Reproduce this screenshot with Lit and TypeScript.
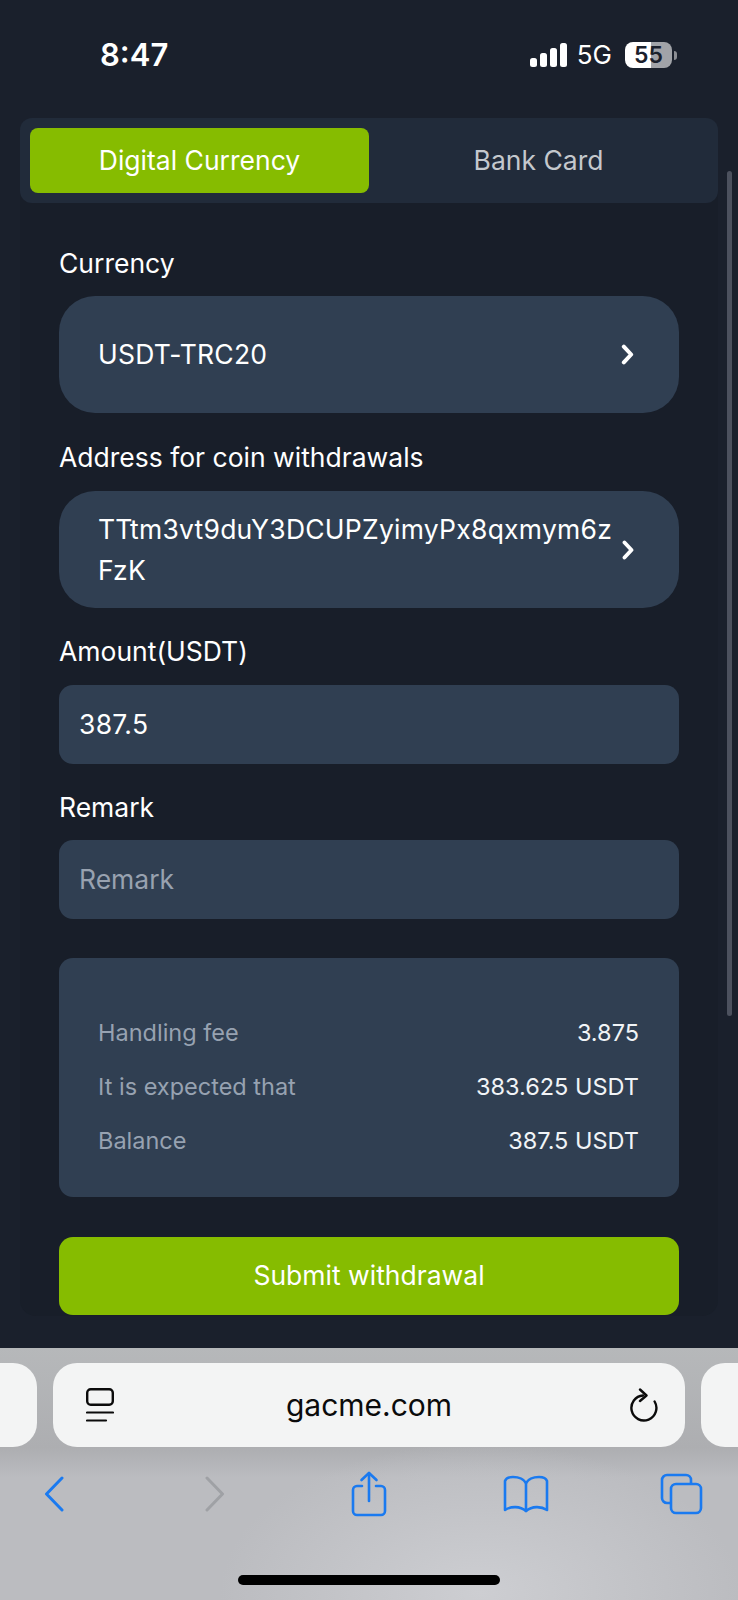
import { LitElement, html, css } from "lit";
import { customElement } from "lit/decorators.js";

@customElement("app-root")
export class AppRoot extends LitElement {
  static styles = css`
    :host { display: block; width: 738px; height: 1600px; overflow: hidden; font-family: Inter, "Noto Sans", sans-serif; color: #fff; background: #1a202c; }
    * { box-sizing: border-box; }
    .screen { position: relative; height: 1600px; display: flex; flex-direction: column; }
    .page { height: 1348px; flex: none; background: #1a202c; overflow: hidden; }
    .status { height: 118px; display: flex; align-items: center; padding: 0 61px 8px 100px; justify-content: space-between; }
    .time { font-size: 31px; font-weight: 600; letter-spacing: 0; line-height: 40px; }
    .status-right { display: flex; align-items: center; }
    .net { font-size: 26px; font-weight: 400; margin: 0 13px 0 10px; line-height: 30px; }
    .battery { position: relative; width: 47px; height: 26px; border-radius: 8px; overflow: hidden; background: linear-gradient(90deg, #fff 0 55%, #a1a3a8 55% 100%); color: #1a202c; font-size: 23px; font-weight: 600; display: flex; align-items: center; justify-content: center; line-height: 26px; }
    .cap { width: 3px; height: 9px; margin-left: 2px; background: #8c8e94; border-radius: 0 3px 3px 0; }
    .card { margin: 0 20px; height: 1198px; background: #181e29; border-radius: 16px; }
    .tabs { height: 85px; background: #212b3a; border-radius: 12px; padding: 10px; display: flex; }
    .tab { flex: 1; display: flex; align-items: center; justify-content: center; font-size: 26.5px; color: #c4c8cd; border-radius: 8px; height: 65px; padding-bottom: 1px; }
    .tab.on { background: #86bc00; color: #fff; }
    .form { padding: 0 39px; }
    .label { height: 77px; display: flex; align-items: center; font-size: 26.5px; padding-top: 9px; color: #fff; }
    .label.first { height: 93px; padding-top: 26px; }
    .label.wide { height: 78px; }
    .label.narrow { height: 76px; }
    .select { height: 117px; border-radius: 36px; background: #303f52; display: flex; align-items: center; padding: 0 45px 0 39px; font-size: 26.5px; line-height: 41px; color: #fff; }
    .select .val { flex: 1; min-width: 0; word-break: break-all; margin-right: 8px; letter-spacing: 0.25px; }
    .input { height: 79px; border-radius: 14px; background: #303f52; display: flex; align-items: center; padding: 0 20px 2px; font-size: 26.5px; color: #fff; letter-spacing: 0.3px; }
    .input.ph { color: #98a2b0; letter-spacing: 0; }
    .info { margin-top: 39px; height: 239px; border-radius: 14px; background: #303f52; padding: 47px 40px 0 39px; display: flex; flex-direction: column; font-size: 23.5px; }
    .row { height: 54px; flex: none; display: flex; align-items: center; justify-content: space-between; color: #97a2b1; }
    .row b { font-weight: 400; color: #f1f4f7; }
    .submit { margin-top: 40px; height: 78px; border-radius: 14px; background: #86bc00; display: flex; align-items: center; justify-content: center; font-size: 26.5px; color: #fff; padding-bottom: 3px; }
    .scroll { position: absolute; left: 727px; top: 171px; width: 5px; height: 845px; border-radius: 3px; background: #4c515e; }
    .safari { flex: 1; background: radial-gradient(ellipse 260px 150px at 480px 245px, #cdced2 0%, #c3c4c8 55%, rgba(190,191,195,0) 100%), linear-gradient(180deg, #b6b8ba 0, #adaeb1 100px, #bbbcc0 130px, #bbbcc0 100%); display: flex; flex-direction: column; }
    .pills { margin-top: 15px; height: 84px; display: flex; justify-content: center; gap: 16px; overflow: hidden; flex: none; }
    .pill { flex: none; width: 100px; height: 84px; border-radius: 24px; background: #f3f4f4; }
    .url { width: 632px; display: grid; grid-template-columns: 33px 28px 1fr 28px 27px; align-items: center; color: #0b0b0b; }
    .url-text { text-align: center; font-size: 30px; font-weight: 400; padding-right: 6px; }
    svg { display: block; fill: none; }
    .bar { margin-top: 22px; height: 50px; display: grid; grid-template-columns: 108px 214px 94px 220px 90px; justify-items: center; align-items: center; }
    .home { margin: 56px auto 0; width: 262px; height: 10px; border-radius: 5px; background: #000; flex: none; }
    .chev { flex: none; }
  `;

  private chevron(h: number) {
    const w = Math.round(h * 0.6);
    return html`<svg class="chev" width=${w} height=${h} viewBox="0 0 12 20"><path d="M2.5 2.5 L9.5 10 L2.5 17.5" stroke="#fff" stroke-width="3.8" stroke-linecap="round" stroke-linejoin="round"/></svg>`;
  }

  render() {
    return html`
      <div class="screen">
        <div class="page">
          <div class="status">
            <div class="time">8:47</div>
            <div class="status-right">
              <svg width="37" height="24" viewBox="0 0 37 24"><g fill="#fff"><rect x="0" y="15" width="7" height="9" rx="2.5"/><rect x="10" y="10" width="7" height="14" rx="2.5"/><rect x="20" y="5" width="7" height="19" rx="2.5"/><rect x="30" y="0" width="7" height="24" rx="2.5"/></g></svg>
              <div class="net">5G</div>
              <div class="battery">55</div>
              <div class="cap"></div>
            </div>
          </div>
          <div class="card">
            <div class="tabs">
              <div class="tab on">Digital Currency</div>
              <div class="tab">Bank Card</div>
            </div>
            <div class="form">
              <div class="label first">Currency</div>
              <div class="select"><div class="val">USDT-TRC20</div>${this.chevron(21)}</div>
              <div class="label wide">Address for coin withdrawals</div>
              <div class="select"><div class="val">TTtm3vt9duY3DCUPZyimyPx8qxmym6zFzK</div>${this.chevron(20)}</div>
              <div class="label">Amount(USDT)</div>
              <div class="input">387.5</div>
              <div class="label narrow">Remark</div>
              <div class="input ph">Remark</div>
              <div class="info">
                <div class="row"><span>Handling fee</span><b>3.875</b></div>
                <div class="row"><span>It is expected that</span><b>383.625 USDT</b></div>
                <div class="row"><span>Balance</span><b>387.5 USDT</b></div>
              </div>
              <div class="submit">Submit withdrawal</div>
            </div>
          </div>
        </div>
        <div class="scroll"></div>
        <div class="safari">
          <div class="pills">
            <div class="pill"></div>
            <div class="pill url">
              <span></span>
              <svg width="28" height="34" viewBox="0 0 28 34"><g stroke="#0b0b0b" stroke-linecap="round"><rect x="1.2" y="1.2" width="25.6" height="15.6" rx="3.5" stroke-width="2.4"/><path d="M1 24.5H27" stroke-width="2.2"/><path d="M1 32.5H20" stroke-width="2.2"/></g></svg>
              <div class="url-text">gacme.com</div>
              <svg width="28" height="34" viewBox="0 0 28 34"><g stroke="#0b0b0b" stroke-width="2.4" stroke-linecap="round" stroke-linejoin="round"><path d="M13 7.5 A12.5 12.5 0 1 0 24.6 13.5"/><path d="M10 1.5 L16.5 7.5 L10 13"/></g></svg>
              <span></span>
            </div>
            <div class="pill"></div>
          </div>
          <div class="bar">
            <svg width="20" height="36" viewBox="0 0 20 36"><path d="M18 2 L2.5 18 L18 34" stroke="#1a7af0" stroke-width="3" stroke-linecap="round" stroke-linejoin="round"/></svg>
            <svg width="20" height="36" viewBox="0 0 20 36"><path d="M2 2 L17.5 18 L2 34" stroke="#9fa1a5" stroke-width="3" stroke-linecap="round" stroke-linejoin="round"/></svg>
            <svg width="36" height="46" viewBox="0 0 36 46"><g stroke="#1a7af0" stroke-width="2.6" stroke-linecap="round" stroke-linejoin="round"><path d="M11 15 H6 A4 4 0 0 0 2 19 V40 A4 4 0 0 0 6 44 H30 A4 4 0 0 0 34 40 V19 A4 4 0 0 0 30 15 H25"/><path d="M18 30 V2"/><path d="M10.5 9 L18 2 L25.5 9"/></g></svg>
            <svg width="46" height="38" viewBox="0 0 46 38"><g stroke="#1a7af0" stroke-width="2.6" stroke-linecap="round" stroke-linejoin="round"><path d="M23 8 C20 3 15 2 10 2 C6 2 3 3 2 6 V35 C8 31 17 31 23 36 C29 31 38 31 44 35 V6 C43 3 40 2 36 2 C31 2 26 3 23 8 Z"/><path d="M23 8 V36"/></g></svg>
            <svg width="43" height="42" viewBox="0 0 43 42"><g stroke="#1a7af0" stroke-width="2.6" stroke-linejoin="round" stroke-linecap="round"><path d="M10 30 H7 A5 5 0 0 1 2 25 V7 A5 5 0 0 1 7 2 H26 A5 5 0 0 1 31 7 V10"/><rect x="11" y="11" width="30" height="29" rx="5"/></g></svg>
          </div>
          <div class="home"></div>
        </div>
      </div>
    `;
  }
}
